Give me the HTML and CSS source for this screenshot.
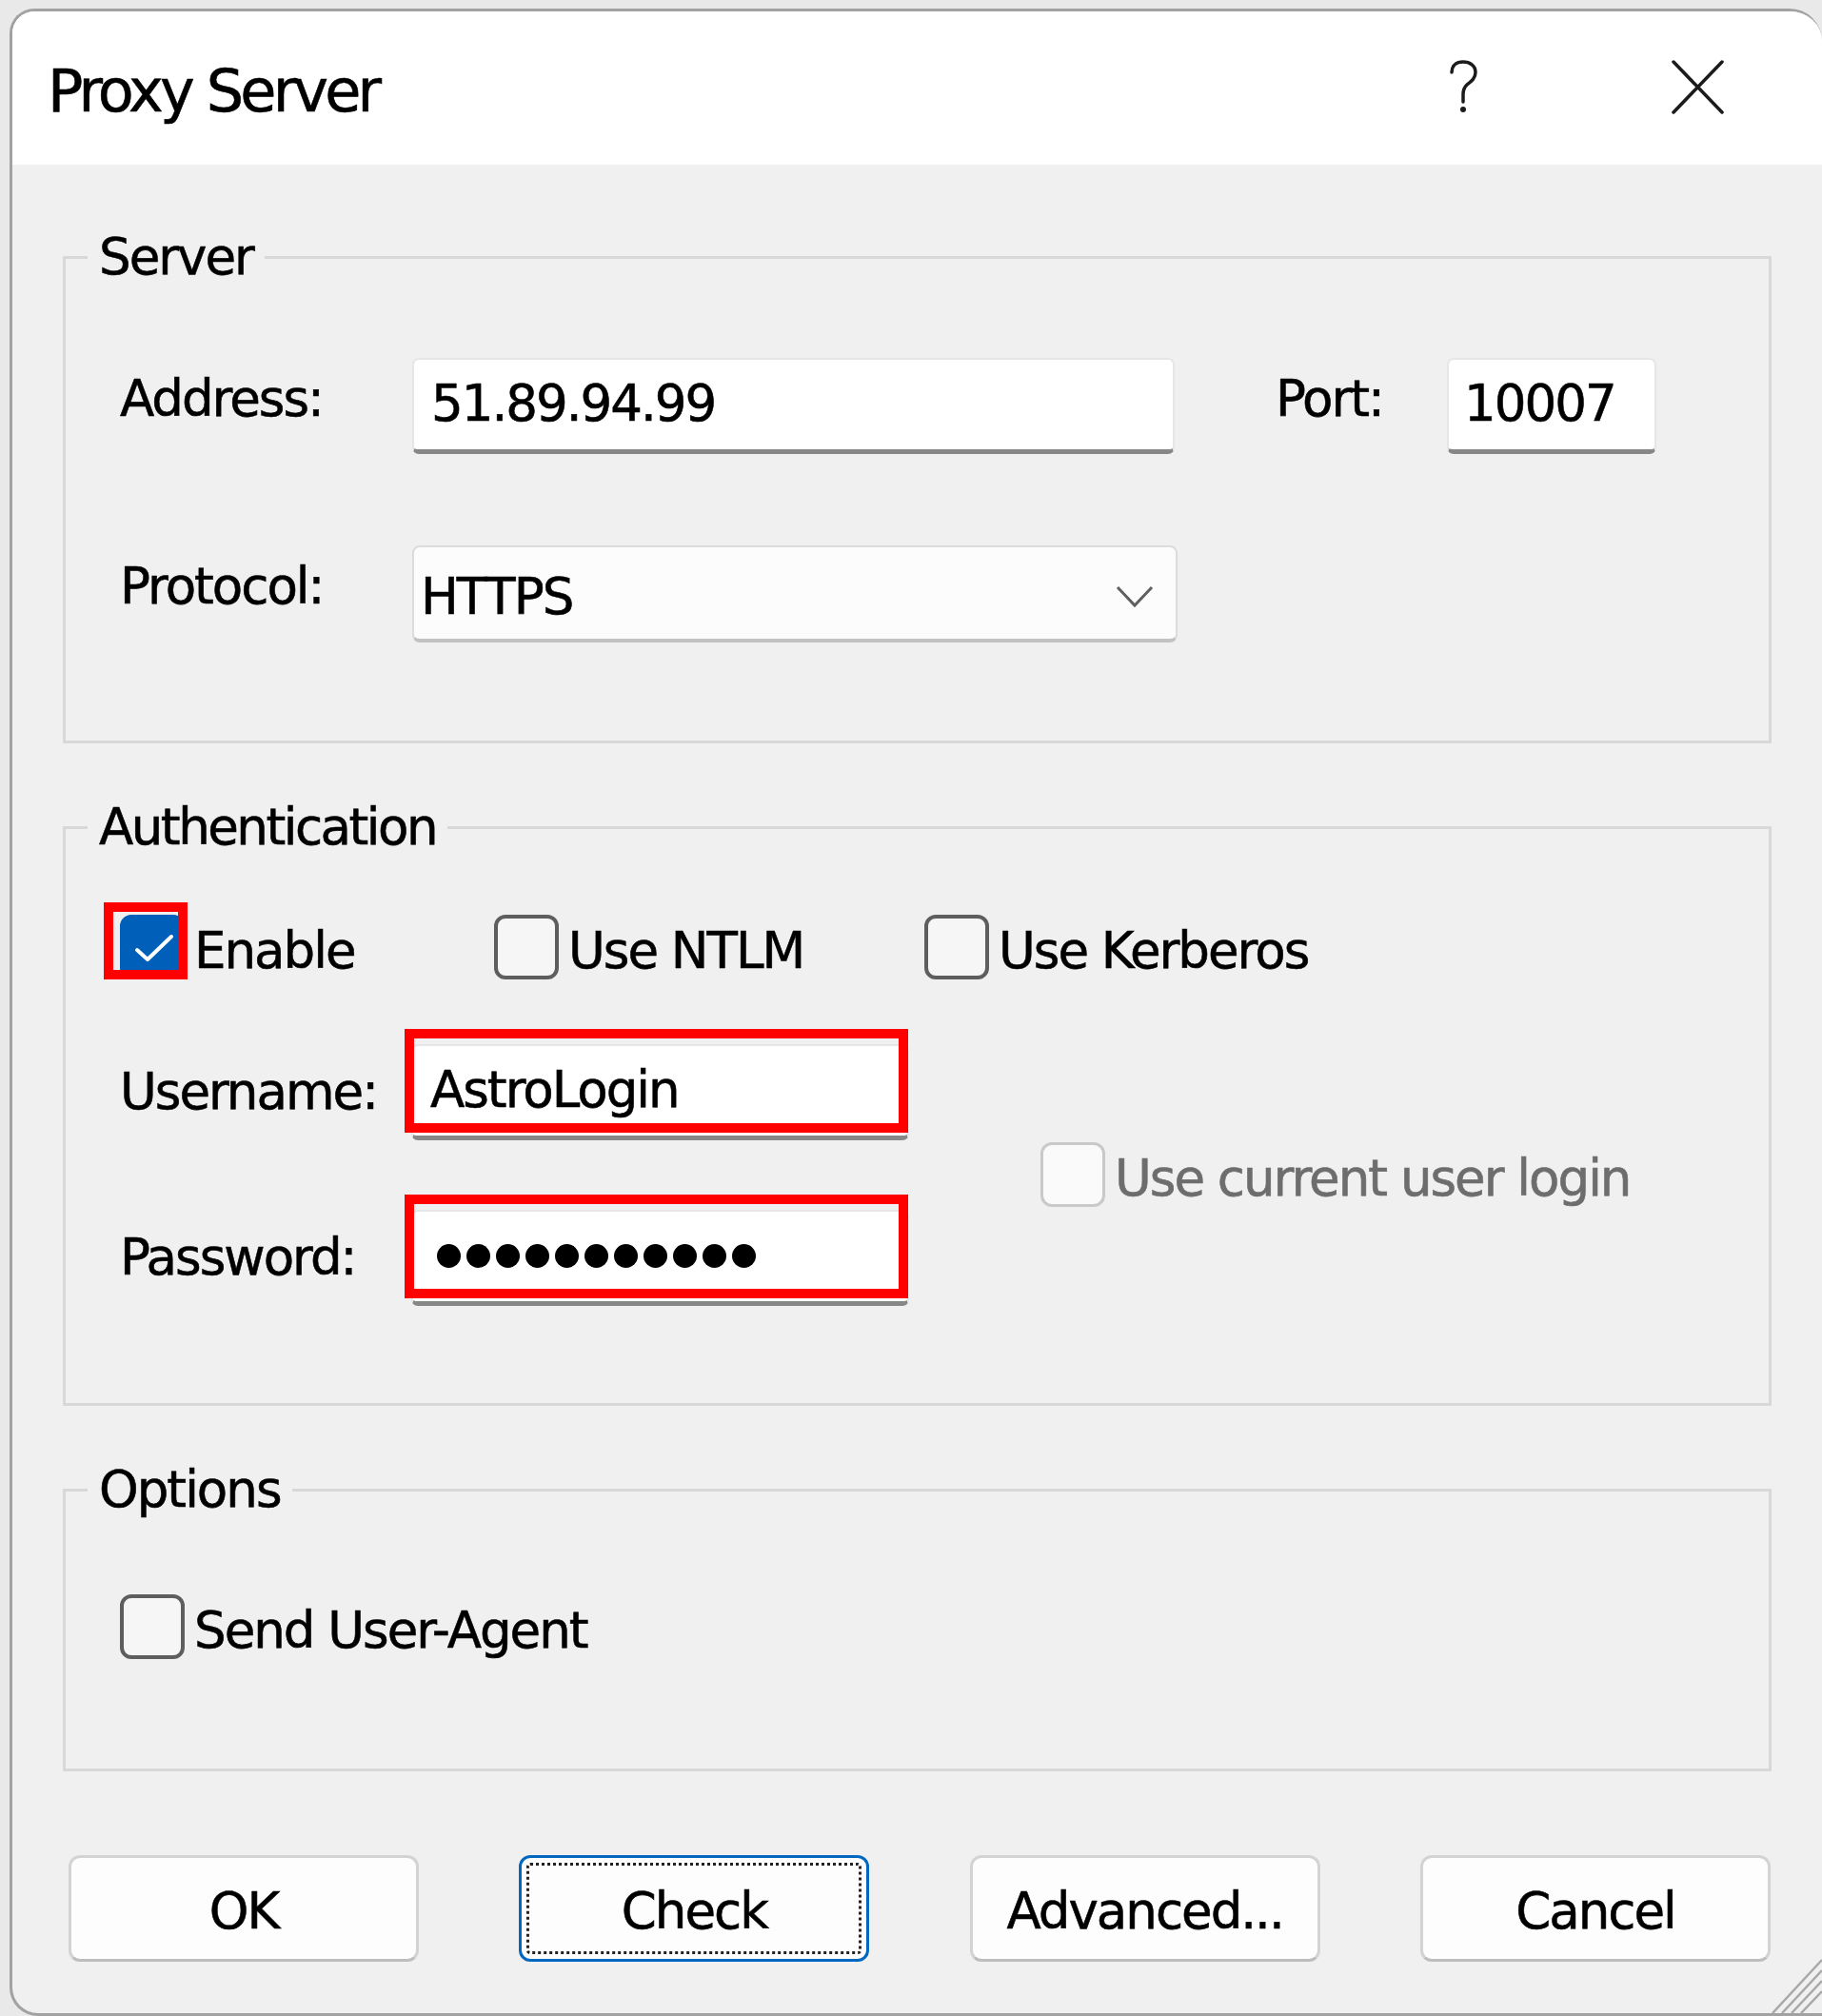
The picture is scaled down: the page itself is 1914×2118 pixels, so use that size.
FILE: index.html
```html
<!DOCTYPE html>
<html lang="en">
<head>
    <meta charset="UTF-8">
    <meta name="viewport" content="width=device-width, initial-scale=1.0">
    <title>Proxy Server</title>
    <link rel="stylesheet" href="styles.css">
</head>
<body>
    <div class="window">
        <div class="titlebar">
            <div class="title">Proxy Server</div>
            <div class="caption help">
                <svg width="31" height="57" viewBox="0 0 31 57">
                    <path d="M3 13 C3 6 8 2 15 2 C22 2 28 6 28 13 C28 19 24 22 19 26 C16 29 15 31 15 36 V44" fill="none" stroke="#1b1b1b" stroke-width="3.5" stroke-linecap="round"/>
                    <circle cx="15" cy="52" r="3" fill="#1b1b1b"/>
                </svg>
            </div>
            <div class="caption close">
                <svg width="55" height="57" viewBox="0 0 55 57">
                    <path d="M2 2 L53 55 M53 2 L2 55" fill="none" stroke="#1b1b1b" stroke-width="3.5" stroke-linecap="round"/>
                </svg>
            </div>
        </div>

        <div class="content">
            <fieldset class="group server">
                <legend>Server</legend>
                <div class="group-body">
                    <div class="row">
                        <span class="label">Address:</span>
                        <div class="field address">51.89.94.99</div>
                        <span class="label port-label">Port:</span>
                        <div class="field port">10007</div>
                    </div>
                    <div class="row">
                        <span class="label">Protocol:</span>
                        <div class="select">
                            <span>HTTPS</span>
                            <svg class="chevron" width="40" height="24" viewBox="0 0 40 24">
                                <polyline points="2,2 20,21 38,2" fill="none" stroke="#5f5f5f" stroke-width="3"/>
                            </svg>
                        </div>
                    </div>
                </div>
            </fieldset>

            <fieldset class="group auth">
                <legend>Authentication</legend>
                <div class="group-body">
                    <div class="checks">
                        <label class="check enable">
                            <span class="box checked mark">
                                <svg width="60" height="60" viewBox="0 0 60 60">
                                    <polyline points="14,33 25,43 50,19" fill="none" stroke="#fff" stroke-width="4" stroke-linecap="round" stroke-linejoin="round"/>
                                </svg>
                            </span>
                            <span class="check-text">Enable</span>
                        </label>
                        <label class="check ntlm">
                            <span class="box"></span>
                            <span class="check-text">Use NTLM</span>
                        </label>
                        <label class="check">
                            <span class="box"></span>
                            <span class="check-text">Use Kerberos</span>
                        </label>
                    </div>
                    <div class="credentials">
                        <div class="cred-fields">
                            <div class="row">
                                <span class="label">Username:</span>
                                <div class="field user mark">AstroLogin</div>
                            </div>
                            <div class="row">
                                <span class="label">Password:</span>
                                <div class="field password mark">
                                    <i class="dot"></i><i class="dot"></i><i class="dot"></i><i class="dot"></i>
                                    <i class="dot"></i><i class="dot"></i><i class="dot"></i><i class="dot"></i>
                                    <i class="dot"></i><i class="dot"></i><i class="dot"></i>
                                </div>
                            </div>
                        </div>
                        <label class="check disabled">
                            <span class="box"></span>
                            <span class="check-text">Use current user login</span>
                        </label>
                    </div>
                </div>
            </fieldset>

            <fieldset class="group options">
                <legend>Options</legend>
                <div class="group-body">
                    <label class="check">
                        <span class="box"></span>
                        <span class="check-text">Send User-Agent</span>
                    </label>
                </div>
            </fieldset>

            <div class="buttons">
                <button class="btn">OK</button>
                <button class="btn focused">Check</button>
                <button class="btn">Advanced...</button>
                <button class="btn">Cancel</button>
            </div>
        </div>

        <svg class="grip" width="56" height="60" viewBox="0 0 56 60">
            <path d="M4 60 L56 4 M14 60 L56 15 M24 60 L56 26 M34 60 L56 37" stroke="#a8a8a8" stroke-width="2.5" fill="none"/>
        </svg>
    </div>
</body>
</html>
```

FILE: styles.css
```css
html, body {
    margin: 0;
    height: 100%;
    overflow: hidden;
}
body {
    box-sizing: border-box;
    padding: 9px 0 0 10px;
    background-color: #e9e9e9;
    font-family: "DejaVu Sans", sans-serif;
    font-size: 53px;
    line-height: 64px;
    letter-spacing: -2px;
    color: #000;
    -webkit-text-stroke: 0.6px currentColor;
}
.window {
    position: relative;
    width: 1904px;
    height: 2109px;
    box-sizing: border-box;
    border: 3px solid #a2a2a2;
    border-right-width: 0;
    border-radius: 26px 34px 0 30px;
    background-color: #f0f0f0;
    overflow: hidden;
}
.titlebar {
    display: flex;
    height: 161px;
    background-color: #fff;
}
.title {
    flex: 1;
    padding: 52px 0 0 37px;
    font-size: 62px;
    letter-spacing: -3.8px;
}
.caption {
    display: flex;
    justify-content: center;
    align-items: flex-start;
    box-sizing: border-box;
    width: 232px;
    padding-top: 51px;
}
.caption.close {
    width: 261px;
}
.content {
    padding: 65px 53px 0 53px;
}
.group {
    margin: 0;
    padding: 0;
    min-inline-size: 0;
    border: 3px solid #d8d8d8;
}
.group + .group {
    margin-top: 56px;
}
.group legend {
    margin-left: 23px;
    padding: 0 12px;
    line-height: 64px;
}
.auth legend {
    letter-spacing: -2.5px;
}
.group-body {
    padding-left: 57px;
}
.server .group-body {
    padding-top: 74px;
    padding-bottom: 103px;
}
.auth .group-body {
    padding-top: 60px;
    padding-bottom: 102px;
}
.options .group-body {
    padding-top: 78px;
    padding-bottom: 113px;
}
.row {
    display: flex;
    align-items: flex-start;
}
.server .row + .row {
    margin-top: 96px;
}
.label {
    flex: none;
    width: 307px;
    margin-top: 11px;
}
.auth .label {
    width: 306px;
    margin-top: 18px;
}
.port-label {
    width: 180px;
    margin-left: 106px;
}
.field {
    flex: none;
    box-sizing: border-box;
    height: 101px;
    padding: 14px 0 0 18px;
    background-color: #fff;
    border: 2px solid #e6e6e6;
    border-bottom: 5px solid #878787;
    border-radius: 7px;
}
.field.address {
    width: 801px;
}
.field.port {
    width: 220px;
    padding-left: 16px;
}
.field.user, .field.password {
    width: 523px;
}
.field.password {
    display: flex;
    gap: 6px;
    padding: 34px 0 0 25px;
}
.dot {
    width: 25px;
    height: 25px;
    border-radius: 50%;
    background-color: #000;
}
.select {
    flex: none;
    display: flex;
    align-items: flex-start;
    box-sizing: border-box;
    width: 804px;
    height: 102px;
    padding: 20px 23px 0 7px;
    background-color: #fcfcfc;
    border: 2px solid #dcdcdc;
    border-bottom: 4px solid #c2c2c2;
    border-radius: 8px;
}
.chevron {
    margin-left: auto;
    margin-top: 20px;
}
.checks {
    display: flex;
}
.check {
    display: flex;
    align-items: flex-start;
}
.check-text {
    margin-top: 6px;
}
.box {
    flex: none;
    box-sizing: border-box;
    width: 68px;
    height: 68px;
    margin-right: 10px;
    border: 4px solid #5e5e5e;
    border-radius: 12px;
    background-color: #f6f6f6;
}
.box svg {
    display: block;
}
.box.checked {
    background-color: #005fb8;
    border-color: #005fb8;
}
.enable {
    width: 393px;
}
.ntlm {
    width: 452px;
}
.credentials {
    display: flex;
    align-items: center;
    margin-top: 66px;
}
.cred-fields {
    flex: none;
    width: 829px;
}
.cred-fields .row + .row {
    margin-top: 73px;
}
.check.disabled {
    margin-left: 138px;
}
.disabled .box {
    border: 3px solid #c9c9c9;
    background-color: #fafafa;
}
.disabled .check-text {
    color: #6d6d6d;
}

/* red highlight frames drawn over the screenshot */
.mark {
    position: relative;
}
.mark::after {
    content: "";
    position: absolute;
    box-sizing: border-box;
    border: 10px solid #ff0000;
    pointer-events: none;
}
.box.mark::after {
    left: -21px;
    top: -17px;
    width: 88px;
    height: 81px;
}
.field.mark::after {
    left: -9px;
    top: -18px;
    width: 529px;
    height: 109px;
}

.buttons {
    display: flex;
    justify-content: space-between;
    margin: 88px 1px 0 6px;
}
.btn {
    box-sizing: border-box;
    width: 368px;
    height: 112px;
    padding: 6px 0 0;
    font: inherit;
    letter-spacing: inherit;
    color: #000;
    background-color: #fdfdfd;
    border: 3px solid #d3d3d3;
    border-bottom-color: #bdbdbd;
    border-radius: 12px;
}
.btn.focused {
    border-color: #0067c0;
    outline: 3px dotted #222;
    outline-offset: -11px;
}
.grip {
    position: absolute;
    right: 0;
    bottom: 0;
}
```
